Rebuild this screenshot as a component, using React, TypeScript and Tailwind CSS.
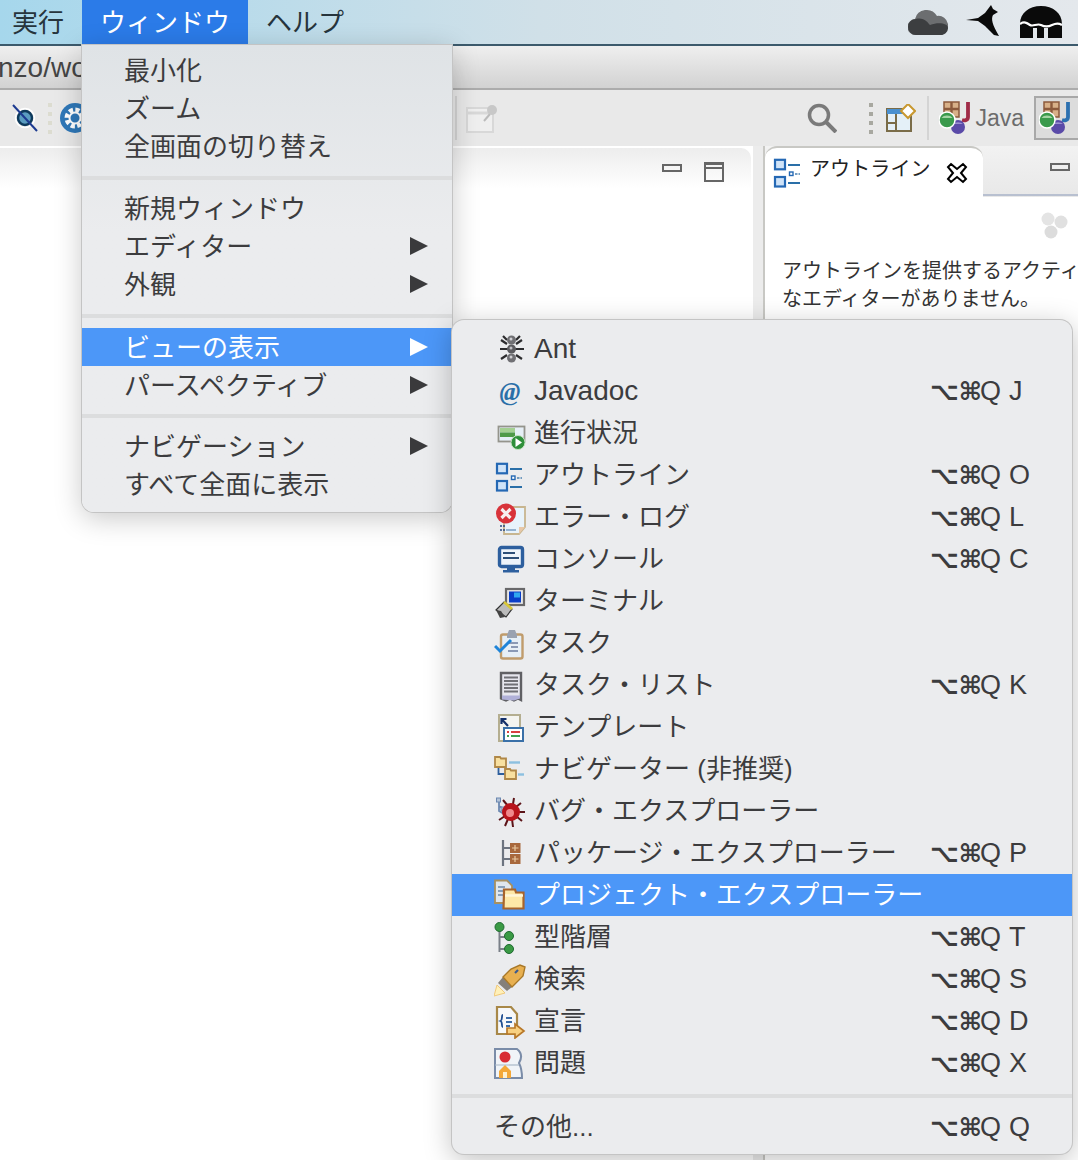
import type { ReactNode } from "react";

const Ico = ({ children }: { children: ReactNode }) => (
  <svg viewBox="0 -2 32 36" className="w-8 h-9 shrink-0">
    {children}
  </svg>
);

const OutlineGlyph = () => (
  <>
    <rect x="3" y="4.800" width="10" height="9.500" fill="#cfe3f8" stroke="#2468b4" strokeWidth="2.200" />
    <rect x="3" y="22" width="10" height="9.500" fill="#cfe3f8" stroke="#2468b4" strokeWidth="2.200" />
    <path d="M16 10h12M16 28h12" stroke="#2a6fa8" strokeWidth="1.800" />
    <rect x="17.500" y="17" width="3.500" height="3.500" fill="#fff" stroke="#2468b4" strokeWidth="1.400" />
    <path d="M23 19h5" stroke="#4a80b0" strokeWidth="1.500" strokeDasharray="2.500 1" />
  </>
);

const AntIcon = () => (
  <Ico>
    <path d="M7 7l6 4M28 7l-6 4M6 16h24M7 26l6-4M28 26l-6-4M9 3l4 4M26 3l-4 4" stroke="#2c2c2e" strokeWidth="2.200" fill="none" />
    <circle cx="17.500" cy="7" r="4.500" fill="#707074" />
    <circle cx="17.500" cy="16" r="4.500" fill="#5c5c60" />
    <circle cx="17.500" cy="25" r="4.500" fill="#707074" />
    <circle cx="17" cy="6" r="1.500" fill="#d0d0d4" />
    <circle cx="17" cy="15" r="1.500" fill="#c0c0c4" />
    <circle cx="17" cy="24" r="1.500" fill="#d0d0d4" />
  </Ico>
);

const AtIcon = () => (
  <span className="w-8 text-center text-[25px] leading-none font-bold italic font-['Liberation_Serif',serif] text-[#2a6fa8] shrink-0">@</span>
);

const ProgressIcon = () => (
  <Ico>
    <rect x="4.500" y="9.500" width="26" height="15" fill="#e6eff6" stroke="#94948c" strokeWidth="1.800" />
    <rect x="6" y="11" width="15" height="4.500" fill="#a4d092" />
    <rect x="6" y="15.500" width="15" height="4.500" fill="#4f9a48" />
    <circle cx="24" cy="25.500" r="7" fill="#2f8f3a" stroke="#c6e3c2" strokeWidth="1" />
    <path d="M21.500 21l6.500 4.500-6.500 4.500z" fill="#fff" />
  </Ico>
);

const OutlineIcon = () => (
  <Ico>
    <OutlineGlyph />
  </Ico>
);

const ErrorIcon = () => (
  <Ico>
    <path d="M10 6h21v20l-6 7H10z" fill="#e8f3fb" stroke="#c8b690" strokeWidth="1.800" />
    <path d="M31 26l-6 7v-7z" fill="#e8c8a8" />
    <path d="M12 29h10" stroke="#7a9cc0" strokeWidth="1.500" />
    <path d="M6 25h5M6 29h5" stroke="#2a4a80" strokeWidth="1.600" strokeDasharray="2 1" />
    <circle cx="12" cy="12.500" r="10" fill="#d8333a" />
    <path d="M7.500 8l9 9M16.500 8l-9 9" stroke="#f6eeee" strokeWidth="3.200" />
  </Ico>
);

const ConsoleIcon = () => (
  <Ico>
    <rect x="5.500" y="4.500" width="23" height="19" rx="2" fill="#eef4fa" stroke="#2d5f9e" strokeWidth="3.400" />
    <path d="M9 10h12M9 15h16" stroke="#2d4f78" strokeWidth="2" />
    <path d="M13 25h8v2h4v2.500H9V27h4z" fill="#2d5f9e" />
  </Ico>
);

const TerminalIcon = () => (
  <Ico>
    <rect x="12" y="4" width="18" height="16" fill="#e8e8e8" stroke="#68686a" strokeWidth="2.200" />
    <rect x="15" y="6.500" width="12" height="11" fill="#0a3ec8" />
    <rect x="20" y="7.500" width="6" height="5" fill="#30a8f0" />
    <path d="M10 17l8 7-6 8-10-7z" fill="#bbb" stroke="#333" strokeWidth="1.200" />
    <path d="M10 17l8 7" stroke="#d8c838" strokeWidth="2.600" />
    <path d="M2 25l4 8 5-1-4-6z" fill="#444" />
  </Ico>
);

const TaskIcon = () => (
  <Ico>
    <rect x="7" y="7.500" width="21.500" height="24" rx="2" fill="#e6eff6" stroke="#c09c6c" strokeWidth="2.400" />
    <path d="M13 8l2-5h6l2 5v3H13z" fill="#9aa2b0" />
    <path d="M14 16h10M17 20h7M14 24h10" stroke="#6c7ea0" strokeWidth="1.700" />
    <path d="M1 19l5 5L17 13" stroke="#1f84d8" strokeWidth="3" fill="none" />
  </Ico>
);

const TaskListIcon = () => (
  <Ico>
    <path d="M7 4h20v27l-3-1.500-4 2-4-2-4 2-5-2z" fill="#e6e6ee" stroke="#606064" strokeWidth="2.400" />
    <path d="M10 8.500h14M10 12h14M10 15.500h14M10 19h14M10 22.500h14" stroke="#707076" strokeWidth="2" />
    <path d="M8 26.500h18v3l-6 2-12-1z" fill="#b0b0d8" />
  </Ico>
);

const TemplateIcon = () => (
  <Ico>
    <rect x="5" y="4" width="21" height="26" fill="#f4f4f0" stroke="#b4ae90" strokeWidth="2" />
    <path d="M14 15L7.500 8M7.500 13V8h5" stroke="#14306a" strokeWidth="2.200" fill="none" />
    <rect x="10" y="17" width="19" height="13" fill="#fff" stroke="#3a70a8" strokeWidth="2" />
    <path d="M13 21h2M17 21h9" stroke="#d84040" strokeWidth="2" />
    <path d="M13 25h2M17 25h9" stroke="#40a050" strokeWidth="2" />
  </Ico>
);

const NavigatorIcon = () => (
  <Ico>
    <path d="M4.500 14v7H11" stroke="#2d5f9e" strokeWidth="1.800" fill="none" />
    <path d="M1 4h5l1 1.500h5V14H1z" fill="#f8e0a0" stroke="#b08848" strokeWidth="1.800" />
    <path d="M11 16h5l1 1.500h5V26H11z" fill="#f8e0a0" stroke="#b08848" strokeWidth="1.800" />
    <path d="M15 9.500h11" stroke="#8cc0e0" strokeWidth="2.400" />
    <path d="M24 21.500h6" stroke="#8cc0e0" strokeWidth="2.400" />
  </Ico>
);

const BugIcon = () => (
  <Ico>
    <path d="M5 6v10l5 3M5 11l5 3" stroke="#6c88b0" strokeWidth="1.800" fill="none" />
    <rect x="2.500" y="3" width="4" height="4" fill="#b4c4d8" stroke="#6c88b0" />
    <rect x="7" y="12" width="4" height="4" fill="#b4c4d8" stroke="#6c88b0" />
    <path d="M9 5l5 6M20 3l-1 6M31 17h-6M27 8l-5 4M28 26l-6-5M19 32l-1-8M11 31l3-7M5 25l6-4" stroke="#5c1418" strokeWidth="2" />
    <circle cx="17" cy="17" r="9" fill="#b8141c" />
    <circle cx="16" cy="18" r="4" fill="#f0888c" />
  </Ico>
);

const PackageIcon = () => (
  <Ico>
    <path d="M9 3v26M9 11h7M9 22h7" stroke="#6c7480" strokeWidth="2.200" fill="none" />
    <rect x="16" y="6" width="10.500" height="10" fill="#a8683c" />
    <rect x="16" y="17" width="10.500" height="10" fill="#a8683c" />
    <path d="M18 11h6.500M21 8v6M18 22h6.500M21 19v6" stroke="#e8c8a0" strokeWidth="1.200" />
  </Ico>
);

const ProjectIcon = () => (
  <Ico>
    <path d="M1 1.500h12l5 5V24H1z" fill="#dfe6ee" stroke="#a89060" strokeWidth="1.800" />
    <path d="M4 8h7M4 12h7M4 16h5" stroke="#6c88a8" strokeWidth="1.600" />
    <path d="M10 14V10.500h11l1 3h7.500v16H9.500z" fill="#fde8a8" stroke="#a8642c" strokeWidth="2.200" />
    <path d="M11 16.500h18" stroke="#fff6d8" strokeWidth="2.400" />
  </Ico>
);

const HierarchyIcon = () => (
  <Ico>
    <path d="M5.500 8v23M5.500 16h7M5.500 28h7" stroke="#7a8088" strokeWidth="2" fill="none" />
    <circle cx="5.500" cy="6" r="4.500" fill="#3a9a44" stroke="#1e6a30" />
    <circle cx="15" cy="15" r="4.500" fill="#3a9a44" stroke="#1e6a30" />
    <circle cx="15" cy="28" r="4.500" fill="#3a9a44" stroke="#1e6a30" />
  </Ico>
);

const SearchIcon = () => (
  <Ico>
    <path d="M0 33l3-11 8 8z" fill="#fff0b8" stroke="#f0c878" strokeWidth="1" />
    <path d="M4 20l9 8 5-4-9-10z" fill="#85807a" />
    <path d="M9 14l9 10 11-11 2-9-5-2-9 4z" fill="#e8b050" stroke="#a87828" strokeWidth="1.400" />
    <path d="M21 10l3-3" stroke="#3a5a90" strokeWidth="2.200" />
  </Ico>
);

const DeclarationIcon = () => (
  <Ico>
    <path d="M3 2h14l6 7v20H3z" fill="#f6f8fa" stroke="#a88848" strokeWidth="2.200" />
    <path d="M9 10c-2 0 0 5-2.500 6 2.500 1 .5 6 2.500 6" stroke="#1c4c90" strokeWidth="1.800" fill="none" />
    <path d="M12 13h6M12 17h6M12 21h4" stroke="#3a6ca8" strokeWidth="1.900" />
    <path d="M13 23h8v-4l9 7-9 7v-4h-8z" fill="#f8d080" stroke="#b87828" strokeWidth="1.700" />
  </Ico>
);

const ProblemsIcon = () => (
  <Ico>
    <path d="M1 2h22c5 4 5 9 2 14 3 6 3 10 3 15H1z" fill="#f0f4f8" stroke="#7a8ca8" strokeWidth="2" />
    <path d="M1 18h24" stroke="#a8b8c8" strokeWidth="1.200" />
    <circle cx="11" cy="10" r="5.500" fill="#d82c34" />
    <path d="M11 18l6 6v7H5v-7z" fill="#f4a838" />
    <rect x="9" y="25" width="4" height="6" fill="#fdf0d0" />
  </Ico>
);

type Row = { icon?: ReactNode; label: string; latin?: boolean; keys?: string; active?: boolean };

const views: Row[] = [
  { icon: <AntIcon />, label: "Ant", latin: true },
  { icon: <AtIcon />, label: "Javadoc", latin: true, keys: "J" },
  { icon: <ProgressIcon />, label: "進行状況" },
  { icon: <OutlineIcon />, label: "アウトライン", keys: "O" },
  { icon: <ErrorIcon />, label: "エラー・ログ", keys: "L" },
  { icon: <ConsoleIcon />, label: "コンソール", keys: "C" },
  { icon: <TerminalIcon />, label: "ターミナル" },
  { icon: <TaskIcon />, label: "タスク" },
  { icon: <TaskListIcon />, label: "タスク・リスト", keys: "K" },
  { icon: <TemplateIcon />, label: "テンプレート" },
  { icon: <NavigatorIcon />, label: "ナビゲーター (非推奨)" },
  { icon: <BugIcon />, label: "バグ・エクスプローラー" },
  { icon: <PackageIcon />, label: "パッケージ・エクスプローラー", keys: "P" },
  { icon: <ProjectIcon />, label: "プロジェクト・エクスプローラー", active: true },
  { icon: <HierarchyIcon />, label: "型階層", keys: "T" },
  { icon: <SearchIcon />, label: "検索", keys: "S" },
  { icon: <DeclarationIcon />, label: "宣言", keys: "D" },
  { icon: <ProblemsIcon />, label: "問題", keys: "X" },
];

const Shortcut = ({ k }: { k: string }) => (
  <span className="w-[142px] shrink-0 flex items-center text-[27px] leading-none text-[#3c3c3e]">
    <span className="font-['DejaVu_Sans',sans-serif] font-bold text-[25px] w-[50px] whitespace-nowrap">⌥⌘</span>
    <span>Q</span>
    <span className="ml-2">{k}</span>
  </span>
);

const ViewRow = ({ icon, label, latin, keys, active }: Row) => (
  <div className={`h-[42px] pl-[42px] flex items-center ${active ? "bg-[#4c97f8] text-white" : "text-[#3c3c3e]"}`}>
    {icon}
    <span className={`flex-1 whitespace-nowrap leading-none ${icon ? "ml-2" : ""} ${latin ? "text-[28px]" : "text-[26px]"}`}>{label}</span>
    {keys && <Shortcut k={keys} />}
  </div>
);

const Arrow = ({ white }: { white?: boolean }) => (
  <svg viewBox="0 0 18 18" className="w-[18px] h-[18px] -mt-[3px]">
    <polygon points="0,0 18,9 0,18" fill={white ? "#fff" : "#3a3a3c"} />
  </svg>
);

const MenuRow = ({ label, sub, active }: { label: string; sub?: boolean; active?: boolean }) => (
  <div className={`h-[38px] pt-[2px] pl-[42px] pr-[24px] flex items-center justify-between text-[26px] leading-none whitespace-nowrap ${active ? "bg-[#4c97f8] text-white" : "text-[#3c3c3e]"}`}>
    <span>{label}</span>
    {sub && <Arrow white={active} />}
  </div>
);

const MenuSep = ({ className }: { className: string }) => <div className={`h-1 bg-[#dcddde] ${className}`} />;

const JavaPerspective = ({ color }: { color: string }) => (
  <svg viewBox="0 0 34 34" className="w-[34px] h-[34px] shrink-0">
    <rect x="5" y="1" width="15" height="15" fill="#d8b088" stroke="#8c5a3c" strokeWidth="1.500" />
    <path d="M12.500 1v15M5 8h15" stroke="#8c5a3c" strokeWidth="2.400" />
    <path d="M29 1v15c0 3-3 4-6 3" stroke={color} strokeWidth="3.800" fill="none" />
    <circle cx="19" cy="26" r="7" fill="#5a4aa8" />
    <path d="M14 23a6 4 0 0 1 10 0" fill="#9a90d0" />
    <circle cx="8" cy="19" r="8" fill="#3a9a4c" stroke="#fff" strokeWidth="1.500" />
    <path d="M2.500 17a6 4 0 0 1 11 0" fill="#a4d4a4" />
  </svg>
);

const Dots = ({ color }: { color: string }) => (
  <div className="flex flex-col gap-[5px] w-[4px] shrink-0">
    {[0, 1, 2, 3].map((i) => (
      <span key={i} className={`w-1 h-1 ${color}`} />
    ))}
  </div>
);

export default function App() {
  return (
    <div className="relative w-[1078px] h-[1160px] overflow-hidden bg-white flex flex-col font-['Liberation_Sans','Noto_Sans_CJK_JP',sans-serif]">
      {/* menu bar */}
      <div className="h-[46px] shrink-0 flex border-b-2 border-[#3c5a6c] bg-gradient-to-r from-[#a6d7ec] via-[#d0e0e8] to-[#e4e8ec] text-[26px] leading-none text-[#26343c]">
        <span className="w-[82px] pl-3 pt-[1px] flex items-center">実行</span>
        <span className="w-[166px] pl-[18px] pt-[1px] flex items-center bg-[#2b7be8] text-white">ウィンドウ</span>
        <span className="ml-[18px] pt-[1px] flex items-center">ヘルプ</span>
        <div className="ml-auto flex items-center pr-[16px]">
          <svg viewBox="0 0 40 26" className="w-10 h-[26px] -mt-[1px]">
            <path d="M8 26a8 8 0 0 1-1-16 12 12 0 0 1 22-3 9 9 0 0 1 3 19z" fill="#6c6e70" />
            <path d="M8 26a8 8 0 0 1 0-16c8-2 12 4 14 6 8-3 18-2 18 3a7 7 0 0 1-8 7z" fill="#3c3e40" />
          </svg>
          <svg viewBox="0 0 34 32" className="w-[34px] h-8 ml-[18px] -mt-[3px]">
            <path d="M0 15l12-2 7-5 6-8 2 4 5 3-5 3c-2 4-1 9 6 21l-5-1-9-9-7-5z" fill="#0a0a0a" />
          </svg>
          <svg viewBox="0 0 42 32" className="w-[42px] h-8 ml-5">
            <path d="M0 32V18C0 7 9 0 21 0s21 7 21 18v14H28V22h-4v10h-7V22h-4v10z" fill="#0a0a0a" />
            <path d="M0 18c4-3 7-1 10 1s7-2 11 0 7 2 11 0 7-2 10 0" stroke="#fff" strokeWidth="2.200" fill="none" />
          </svg>
        </div>
      </div>

      {/* title bar */}
      <div className="h-[44px] shrink-0 overflow-hidden border-b-2 border-[#acacac] bg-gradient-to-b from-[#efefef] to-[#d2d2d2] text-[#444] text-[28px] leading-[44px] whitespace-nowrap">
        <span className="-ml-[2px] inline-block">nzo/wo</span>
      </div>

      {/* toolbar */}
      <div className="h-[56px] shrink-0 bg-[#e9e9e9] flex items-center pl-3">
        <svg viewBox="0 0 26 28" className="w-[26px] h-7 shrink-0">
          <circle cx="13" cy="14" r="7" fill="#5a9cc0" stroke="#0e3a5c" strokeWidth="2.500" />
          <circle cx="13" cy="14" r="9.500" fill="none" stroke="#fff" strokeWidth="1.500" />
          <path d="M1 1l24 26" stroke="#1c3a90" strokeWidth="2" />
        </svg>
        <div className="ml-[10px]"><Dots color="bg-[#dcdcd0]" /></div>
        <svg viewBox="0 0 30 30" className="w-[30px] h-[30px] ml-[8px] shrink-0">
          <circle cx="15" cy="15" r="15" fill="#2f78b8" />
          <circle cx="15" cy="15" r="8" fill="none" stroke="#fff" strokeWidth="5" strokeDasharray="4 2.300" />
          <circle cx="15" cy="15" r="5.500" fill="none" stroke="#fff" strokeWidth="2" />
        </svg>
        <div className="ml-[365px] w-[2px] h-11 bg-[#d4d4d4] shrink-0" />
        <svg viewBox="0 0 32 30" className="w-8 h-[30px] ml-[9px] shrink-0">
          <rect x="1" y="5" width="26" height="24" fill="#efefef" stroke="#d8d8d8" strokeWidth="2" />
          <path d="M1 10h26" stroke="#d8d8d8" strokeWidth="3" />
          <path d="M18 18l6-7" stroke="#bbb" strokeWidth="2" />
          <circle cx="26" cy="7" r="5" fill="#c8c8c8" />
        </svg>
        <svg viewBox="0 0 30 30" className="w-[30px] h-[30px] ml-auto shrink-0">
          <circle cx="12" cy="12" r="9.500" fill="none" stroke="#7a7a7a" strokeWidth="3.500" />
          <path d="M19 19l10 10" stroke="#7a7a7a" strokeWidth="4" />
        </svg>
        <div className="ml-[32px]"><Dots color="bg-[#a8a8a0]" /></div>
        <svg viewBox="0 0 30 28" className="w-[30px] h-7 ml-[13px] shrink-0">
          <rect x="1" y="5" width="24" height="22" fill="#e4f0f8" stroke="#7a6c48" strokeWidth="2" />
          <path d="M1 5h18v5H1z" fill="#4a90d0" />
          <path d="M10 10v17M1 19h9" stroke="#7a6c48" strokeWidth="2" />
          <path d="M22 0l7 7-7 7-7-7z" fill="#fff" stroke="#c89830" strokeWidth="2" />
        </svg>
        <div className="ml-[11px] w-[2px] h-11 bg-[#d4d4d4] shrink-0" />
        <div className="ml-[10px] shrink-0"><JavaPerspective color="#a02c48" /></div>
        <span className="ml-[2px] text-[23px] leading-none text-[#6c6c6c] shrink-0">Java</span>
        <div className="ml-[10px] w-[62px] -mr-[18px] h-[44px] pl-[3px] flex items-center bg-[#dcdcdc] border-2 border-r-0 border-[#a8a8a8] shrink-0">
          <JavaPerspective color="#2c70b0" />
        </div>
      </div>

      {/* panels */}
      <div className="flex-1 flex min-h-0">
        <div className="w-[753px] shrink-0 rounded-tr-[12px] border-t-2 border-r-2 border-white bg-white bg-gradient-to-b from-[#ededed] to-white to-[4%] flex justify-end items-start pt-[14px] pr-[27px] gap-[22px]">
          <span className="w-5 h-2 mt-[2px] border-2 border-[#666]" />
          <span className="w-5 h-5 border-2 border-t-[3px] border-[#666] relative">
            <span className="absolute left-0 right-0 top-[2px] h-[2px] bg-[#666]" />
          </span>
        </div>
        <div className="w-[10px] shrink-0 bg-[#ececec]" />
        <div className="flex-1 min-w-0 border-l-2 border-[#c8c8c4] bg-white">
          <div className="h-[51px] flex bg-gradient-to-b from-[#f2f2f2] to-[#e8e8e8]">
            <div className="w-[218px] h-[51px] shrink-0 rounded-t-[12px] bg-white flex items-start pl-[7px] border-t-2 border-[#c8c8c4]">
              <div className="mt-[5px]"><OutlineTab /></div>
              <span className="ml-[6px] mt-[11px] text-[20px] leading-none tracking-[0.1px] text-[#222] whitespace-nowrap">アウトライン</span>
              <svg viewBox="0 0 22 22" className="w-[22px] h-[22px] ml-[15px] mt-[14px]">
                <path d="M5 2l6 5 6-5 3 3-5 6 5 6-3 3-6-5-6 5-3-3 5-6-5-6z" fill="#fff" stroke="#000" strokeWidth="2" />
              </svg>
            </div>
            <div className="flex-1 h-[50px] border-b-2 border-[#b8c0d0] flex justify-end pr-2 pt-[17px]">
              <span className="w-5 h-2 border-2 border-[#666]" />
            </div>
          </div>
          <div className="pl-[17px] overflow-hidden">
            <div className="flex justify-end pr-[10px] pt-[14px]">
              <svg viewBox="0 0 28 28" className="w-7 h-7">
                <circle cx="8" cy="8" r="6.500" fill="#e4e4e4" />
                <circle cx="21" cy="11" r="6.500" fill="#e0e0e0" />
                <circle cx="11" cy="21" r="6.500" fill="#dcdcdc" />
              </svg>
            </div>
            <p className="mt-[18px] text-[20px] leading-[28px] text-[#333] whitespace-nowrap">アウトラインを提供するアクティブ</p>
            <p className="text-[20px] leading-[28px] text-[#333] whitespace-nowrap">なエディターがありません。</p>
          </div>
        </div>
      </div>

      {/* window menu */}
      <div className="absolute left-[82px] top-[45px] w-[370px] h-[467px] pt-[6px] rounded-b-[12px] bg-gradient-to-b from-[#dfe3e6] to-[#ebecee] to-[40%] shadow-[0_0_0_1px_#c4c4c4,0_6px_28px_rgba(0,0,0,0.22)]">
        <MenuRow label="最小化" />
        <MenuRow label="ズーム" />
        <MenuRow label="全画面の切り替え" />
        <MenuSep className="mt-[11px] mb-[9px]" />
        <MenuRow label="新規ウィンドウ" />
        <MenuRow label="エディター" sub />
        <MenuRow label="外観" sub />
        <MenuSep className="mt-[11px] mb-[10px]" />
        <MenuRow label="ビューの表示" sub active />
        <MenuRow label="パースペクティブ" sub />
        <MenuSep className="mt-[10px] mb-[9px]" />
        <MenuRow label="ナビゲーション" sub />
        <MenuRow label="すべて全面に表示" />
      </div>

      {/* show view submenu */}
      <div className="absolute left-[452px] top-[320px] w-[620px] h-[834px] pt-2 rounded-[12px] bg-[#ebecee] shadow-[0_0_0_1px_#c4c4c4,0_6px_28px_rgba(0,0,0,0.25)] overflow-hidden">
        {views.map((v) => (
          <ViewRow key={v.label} {...v} />
        ))}
        <div className="h-1 mt-[10px] mb-2 bg-[#dcddde]" />
        <ViewRow label="その他..." keys="Q" />
      </div>
    </div>
  );
}

function OutlineTab() {
  return (
    <svg viewBox="0 -2 32 36" className="w-8 h-9">
      <OutlineGlyph />
    </svg>
  );
}
